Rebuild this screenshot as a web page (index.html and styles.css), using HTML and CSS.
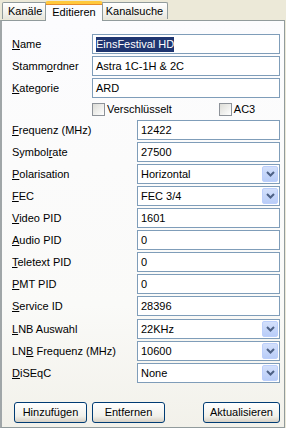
FILE: index.html
```html
<!DOCTYPE html>
<html>
<head>
<meta charset="utf-8">
<link rel="stylesheet" href="styles.css">
</head>
<body>
<div class="window">
  <div class="tabs">
    <div class="tab">Kanäle</div>
    <div class="tab active">Editieren</div>
    <div class="tab">Kanalsuche</div>
  </div>
  <div class="panel">
    <div class="group top">
      <div class="row"><label class="lbl"><u>N</u>ame</label><div class="field"><span class="sel">EinsFestival HD</span></div></div>
      <div class="row"><label class="lbl">Stamm<u>o</u>rdner</label><div class="field">Astra 1C-1H &amp; 2C</div></div>
      <div class="row"><label class="lbl"><u>K</u>ategorie</label><div class="field">ARD</div></div>
    </div>
    <div class="checks">
      <div class="check"><span class="box"></span>Verschlüsselt</div>
      <div class="check ac3"><span class="box"></span>AC3</div>
    </div>
    <div class="group wide">
      <div class="row"><label class="lbl"><u>F</u>requenz (MHz)</label><div class="field">12422</div></div>
      <div class="row"><label class="lbl">Symbol<u>r</u>ate</label><div class="field">27500</div></div>
      <div class="row"><label class="lbl"><u>P</u>olarisation</label><div class="field combo">Horizontal<span class="drop"><svg width="9" height="6" viewBox="0 0 9 6"><path d="M1 1 L4.5 4.5 L8 1" fill="none" stroke="#4d6185" stroke-width="2"/></svg></span></div></div>
      <div class="row"><label class="lbl"><u>F</u>EC</label><div class="field combo">FEC 3/4<span class="drop"><svg width="9" height="6" viewBox="0 0 9 6"><path d="M1 1 L4.5 4.5 L8 1" fill="none" stroke="#4d6185" stroke-width="2"/></svg></span></div></div>
      <div class="row"><label class="lbl"><u>V</u>ideo PID</label><div class="field">1601</div></div>
      <div class="row"><label class="lbl"><u>A</u>udio PID</label><div class="field">0</div></div>
      <div class="row"><label class="lbl"><u>T</u>eletext PID</label><div class="field">0</div></div>
      <div class="row"><label class="lbl"><u>P</u>MT PID</label><div class="field">0</div></div>
      <div class="row"><label class="lbl"><u>S</u>ervice ID</label><div class="field">28396</div></div>
    </div>
    <div class="group wide lnb">
      <div class="row"><label class="lbl"><u>L</u>NB Auswahl</label><div class="field combo">22KHz<span class="drop"><svg width="9" height="6" viewBox="0 0 9 6"><path d="M1 1 L4.5 4.5 L8 1" fill="none" stroke="#4d6185" stroke-width="2"/></svg></span></div></div>
      <div class="row"><label class="lbl">LN<u>B</u> Frequenz (MHz)</label><div class="field combo">10600<span class="drop"><svg width="9" height="6" viewBox="0 0 9 6"><path d="M1 1 L4.5 4.5 L8 1" fill="none" stroke="#4d6185" stroke-width="2"/></svg></span></div></div>
      <div class="row"><label class="lbl"><u>D</u>iSEqC</label><div class="field combo">None<span class="drop"><svg width="9" height="6" viewBox="0 0 9 6"><path d="M1 1 L4.5 4.5 L8 1" fill="none" stroke="#4d6185" stroke-width="2"/></svg></span></div></div>
    </div>
    <div class="buttons">
      <div class="btn">Hinzufügen</div>
      <div class="btn">Entfernen</div>
      <div class="spacer"></div>
      <div class="btn">Aktualisieren</div>
    </div>
  </div>
</div>
</body>
</html>
```
FILE: styles.css
```css
html, body {
  margin: 0;
  padding: 0;
  background: #ece9d8;
}
body {
  font-family: "Liberation Sans", Arial, sans-serif;
  font-size: 11px;
  color: #000;
}
.window {
  width: 286px;
  height: 428px;
  display: flex;
  flex-direction: column;
  overflow: hidden;
}
.tabs {
  display: flex;
  align-items: flex-end;
  height: 20px;
  padding-left: 2px;
  position: relative;
  z-index: 2;
}
.tab {
  height: 17px;
  box-sizing: border-box;
  border: 1px solid #919b9c;
  border-bottom: none;
  border-radius: 2px 2px 0 0;
  background: linear-gradient(#ffffff, #f3f2ec 60%, #e8e6dc);
  padding: 1px 4px 0 5px;
  line-height: 15px;
  margin-bottom: 1px;
}
.tab + .tab { margin-left: -1px; }
.tab.active {
  height: 20px;
  margin-bottom: -1px;
  background: #fcfcfe;
  border-top: 3px solid #ffc83c;
  border-radius: 3px 3px 0 0;
  padding: 0 6px 0 6px;
  line-height: 16px;
  margin-left: -2px;
  margin-right: -2px;
  position: relative;
  z-index: 3;
  box-shadow: inset 0 1px 0 #e68b2c;
}
.panel {
  flex: 1;
  border: 1px solid #919b9c;
  border-left: 2px solid #a0a6a8;
  margin-right: 1px;
  background: linear-gradient(#fcfcfe 0%, #fafaf8 70%, #f2f1ea 100%);
  padding: 13px 4px 0 10px;
  display: flex;
  flex-direction: column;
}
.group {
  display: flex;
  flex-direction: column;
  gap: 2px;
}
.row {
  display: flex;
  align-items: center;
  height: 20px;
}
.lbl {
  width: 80px;
  flex: none;
}
.wide .lbl { width: 125px; }
.field {
  flex: 1;
  height: 20px;
  box-sizing: border-box;
  border: 1px solid #7f9db9;
  background: #fff;
  padding-left: 3px;
  line-height: 18px;
  position: relative;
  white-space: nowrap;
}
.sel {
  background: #1f3570;
  color: #fff;
  padding: 1px 0 2px;
}
.combo .drop {
  position: absolute;
  right: 1px;
  top: 1px;
  width: 16px;
  height: 16px;
  box-sizing: border-box;
  border: 1px solid #bccffb;
  border-radius: 2px;
  background: linear-gradient(#d3e0fb, #b9cdf8);
  display: flex;
  align-items: center;
  justify-content: center;
}
.checks {
  display: flex;
  height: 13px;
  margin: 5px 0 4px 80px;
  align-items: center;
}
.check {
  display: flex;
  align-items: center;
  gap: 2px;
  line-height: 13px;
}
.check.ac3 { margin-left: 47px; }
.box {
  width: 13px;
  height: 13px;
  box-sizing: border-box;
  border: 1px solid #8d9299;
  background: linear-gradient(135deg, #dcdcd7, #ffffff);
  display: inline-block;
}
.lnb { margin-top: 3px; }
.buttons {
  display: flex;
  margin-top: 19px;
  padding-left: 2px;
  gap: 5px;
}
.spacer { flex: 1; }
.btn {
  height: 21px;
  box-sizing: border-box;
  border: 1px solid #003c74;
  border-radius: 3px;
  background: linear-gradient(#ffffff, #f0f0ea 70%, #d6d0c5);
  line-height: 19px;
  padding: 0 6px;
  min-width: 73px;
  text-align: center;
}
```
